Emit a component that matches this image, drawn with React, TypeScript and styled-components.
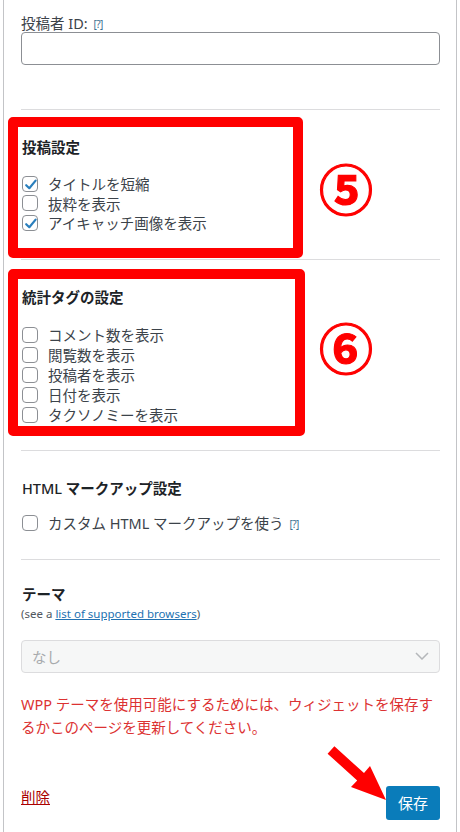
import React from "react";
import styled, { createGlobalStyle } from "styled-components";

const GlobalStyle = createGlobalStyle`
  html, body {
    margin: 0;
    padding: 0;
    background: #fff;
  }
  body {
    font-family: "Noto Sans", "Noto Sans CJK JP", sans-serif;
    color: #3c434a;
  }
`;

const Panel = styled.div`
  position: relative;
  margin-left: 3px;
  width: 454px;
  min-height: 832px;
  box-sizing: border-box;
  border-left: 1px solid #c3c4c7;
  border-right: 1px solid #c3c4c7;
  padding: 15px 16px 0 17px;
`;

const FieldLabel = styled.label`
  display: block;
  font-size: 14.5px;
  line-height: 16px;
  font-weight: 400;
`;

const Help = styled.span`
  font-size: 10px;
  color: #3a6f8f;
  letter-spacing: -0.5px;
  margin-left: 2px;
  vertical-align: 1px;
`;

const TextInput = styled.input`
  display: block;
  width: 100%;
  height: 33px;
  box-sizing: border-box;
  border: 1px solid #8c8f94;
  border-radius: 4px;
  background: #fff;
  margin: 0;
`;

const Divider = styled.hr<{ $top: number }>`
  border: 0;
  border-top: 1px solid #dcdcde;
  margin: ${(p) => p.$top}px 0 0;
  height: 0;
`;

const Section = styled.div<{ $top: number; $bottom: number }>`
  position: relative;
  padding-top: ${(p) => p.$top}px;
  padding-bottom: ${(p) => p.$bottom}px;
`;

const Heading = styled.h3<{ $gap: number }>`
  margin: 0 0 ${(p) => p.$gap}px;
  padding-left: 1px;
  font-size: 14.5px;
  line-height: 20px;
  font-weight: 700;
  color: #1d2327;
`;

const Light = styled.span`
  font-weight: 500;
`;

const Row = styled.label<{ $h: number }>`
  display: flex;
  align-items: center;
  gap: 10px;
  height: ${(p) => p.$h}px;
  font-size: 14.5px;
  color: #3c434a;
`;

const Box = styled.span`
  position: relative;
  width: 16px;
  height: 16px;
  margin-left: 1px;
  flex-shrink: 0;
  box-sizing: border-box;
  border: 1px solid #8c8f94;
  border-radius: 4px;
  background: #fff;
  svg {
    position: absolute;
    left: 0px;
    top: 0px;
  }
`;

const Highlight = styled.div<{ $top: number; $w: number; $h: number }>`
  position: absolute;
  left: -13px;
  top: ${(p) => p.$top}px;
  width: ${(p) => p.$w}px;
  height: ${(p) => p.$h}px;
  box-sizing: border-box;
  border: 10px solid #ff0000;
  border-radius: 5px;
  pointer-events: none;
`;

const Mark = styled.span<{ $x: number; $y: number }>`
  position: absolute;
  left: ${(p) => p.$x}px;
  top: ${(p) => p.$y}px;
  transform: translate(-50%, -50%);
  font-family: "Noto Sans CJK JP", sans-serif;
  font-size: 54px;
  line-height: 1;
  font-weight: 700;
  color: #ff0000;
  -webkit-text-stroke: 1.2px #ff0000;
`;

const Note = styled.div`
  font-size: 11.5px;
  line-height: 16px;
  color: #50575e;
  margin-bottom: 18px;
  a {
    color: #2271b1;
    text-decoration: underline;
  }
`;

const SelectBox = styled.div`
  display: flex;
  align-items: center;
  justify-content: space-between;
  height: 33px;
  box-sizing: border-box;
  padding: 0 10px 0 10px;
  border: 1px solid #dcdcde;
  border-radius: 4px;
  background: #f6f7f7;
  color: #a7aaad;
  font-size: 14.5px;
`;

const ErrorText = styled.p`
  margin: 20px 0 0;
  font-size: 14.5px;
  line-height: 23px;
  color: #dc3232;
`;

const Footer = styled.div`
  position: relative;
  display: flex;
  justify-content: space-between;
  align-items: flex-start;
  margin-top: 47px;
`;

const DeleteLink = styled.a`
  margin-top: 1px;
  font-size: 14.5px;
  line-height: 20px;
  color: #a00;
  text-decoration: underline;
`;

const SaveButton = styled.button`
  width: 54px;
  height: 34px;
  border: 0;
  border-radius: 3px;
  background: #0a7cba;
  color: #fff;
  font-family: "Noto Sans", "Noto Sans CJK JP", sans-serif;
  font-size: 15px;
  padding: 0;
`;

const Arrow = styled.svg`
  position: absolute;
  left: 300px;
  top: -50px;
`;

const Check = ({ checked }: { checked?: boolean }) => (
  <Box>
    {checked && (
      <svg width="16" height="16" viewBox="0 0 16 16">
        <path
          d="M3.2 8.2 L6.3 11.2 L12.6 3.6"
          fill="none"
          stroke="#2a7fbd"
          strokeWidth="2.2"
          strokeLinecap="round"
          strokeLinejoin="round"
        />
      </svg>
    )}
  </Box>
);

const postItems = [
  { label: "タイトルを短縮", checked: true },
  { label: "抜粋を表示", checked: false },
  { label: "アイキャッチ画像を表示", checked: true },
];

const statItems = [
  "コメント数を表示",
  "閲覧数を表示",
  "投稿者を表示",
  "日付を表示",
  "タクソノミーを表示",
];

const App = () => {
  return (
    <>
      <GlobalStyle />
      <Panel>
        <FieldLabel>
          投稿者 ID: <Help>[?]</Help>
        </FieldLabel>
        <TextInput type="text" />

        <Divider $top={44} />
        <Section $top={27} $bottom={26}>
          <Heading $gap={17}>投稿設定</Heading>
          {postItems.map((item, index) => (
            <Row $h={19.5} key={index}>
              <Check checked={item.checked} />
              {item.label}
            </Row>
          ))}
          <Highlight $top={7} $w={295} $h={141} />
          <Mark $x={325} $y={78}>⑤</Mark>
        </Section>

        <Divider $top={0} />
        <Section $top={27} $bottom={25}>
          <Heading $gap={18}>統計タグの設定</Heading>
          {statItems.map((label, index) => (
            <Row $h={20} key={index}>
              <Check />
              {label}
            </Row>
          ))}
          <Highlight $top={9} $w={297} $h={167} />
          <Mark $x={325} $y={87}>⑥</Mark>
        </Section>

        <Divider $top={0} />
        <Section $top={27} $bottom={26}>
          <Heading $gap={15}>
            <Light>HTML</Light> マークアップ設定
          </Heading>
          <Row $h={20}>
            <Check />
            <span>
              カスタム HTML マークアップを使う <Help>[?]</Help>
            </span>
          </Row>
        </Section>

        <Divider $top={0} />
        <Section $top={24} $bottom={0}>
          <Heading $gap={2}>テーマ</Heading>
          <Note>
            (see a <a href="#">list of supported browsers</a>)
          </Note>
          <SelectBox>
            <span>なし</span>
            <svg width="14" height="8" viewBox="0 0 14 8">
              <path d="M1 1 L7 7 L13 1" fill="none" stroke="#b4b7ba" strokeWidth="1.5" />
            </svg>
          </SelectBox>
          <ErrorText>
            WPP テーマを使用可能にするためには、ウィジェットを保存す
            <br />
            るかこのページを更新してください。
          </ErrorText>
          <Footer>
            <DeleteLink href="#">削除</DeleteLink>
            <SaveButton>保存</SaveButton>
            <Arrow width="75" height="70" viewBox="0 0 75 70">
              <polygon
                points="13.4,10.3 43,37.1 49,30 65,64 30,51 36.2,44.5 6.6,17.7"
                fill="#ff0000"
              />
            </Arrow>
          </Footer>
        </Section>
      </Panel>
    </>
  );
};

export default App;
